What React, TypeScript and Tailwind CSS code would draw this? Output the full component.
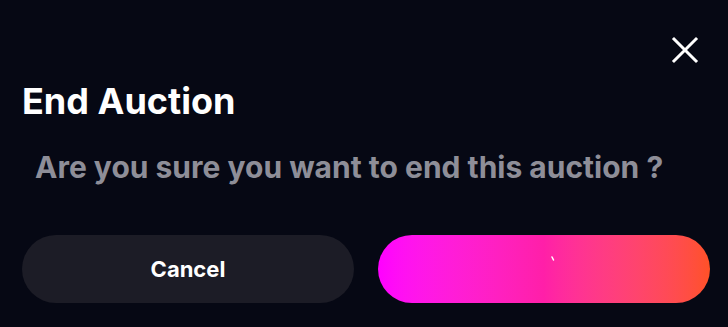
export default function App() {
  return (
    <div className="w-[728px] h-[327px] bg-[#060814] font-['Inter','Liberation_Sans',sans-serif] overflow-hidden">
      <div className="flex justify-end pt-[35px] pr-[28px]">
        <button className="text-white">
          <svg width="30" height="30" viewBox="0 0 30 30" fill="none" stroke="currentColor" strokeWidth={3} strokeLinecap="square">
            <path d="M4 4l22 22M26 4L4 26" />
          </svg>
        </button>
      </div>

      <div className="pl-[22px]">
        <h2 className="mt-[15px] text-[36px] leading-[43px] font-bold text-white">End Auction</h2>
        <p className="mt-[26px] pl-[13px] text-[30px] leading-[36px] font-bold text-[#8e8e98] whitespace-nowrap">
          Are you sure you want to end this auction ?
        </p>

        <div className="mt-[50px] flex gap-[24px]">
          <button className="w-[332px] h-[68px] rounded-full bg-[#1c1c26] text-white text-[22px] font-bold">
            Cancel
          </button>
          <button className="relative w-[332px] h-[68px] rounded-full bg-gradient-to-r from-[#ff00ff] via-[#ff1fa8] to-[#ff5126]">
            <svg className="absolute left-[173px] top-[21px]" width="4" height="6" viewBox="0 0 4 6">
              <path d="M1 1l1.5 3" stroke="white" strokeWidth={1.5} strokeLinecap="round" />
            </svg>
          </button>
        </div>
      </div>
    </div>
  );
}
